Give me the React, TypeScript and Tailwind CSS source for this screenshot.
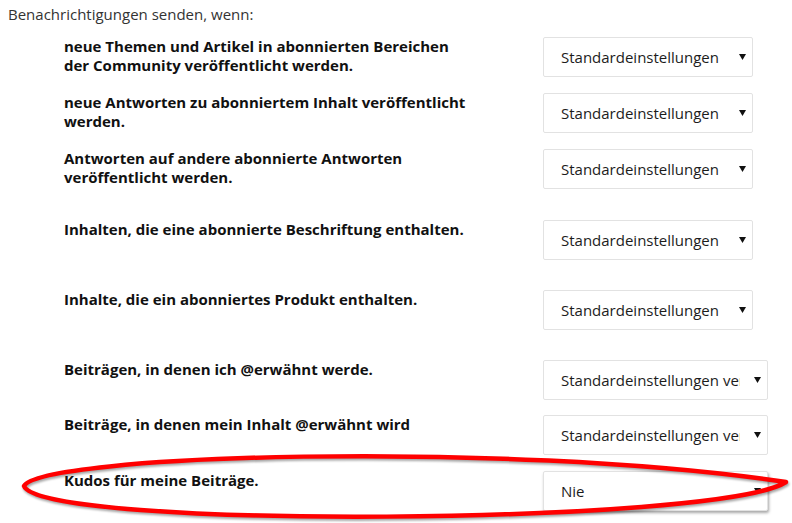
import React from "react";

interface Row {
  lines: string[];
  value: string;
  wide: boolean;
  gap: string;
  focused?: boolean;
}

const rows: Row[] = [
  {
    lines: ["neue Themen und Artikel in abonnierten Bereichen", "der Community veröffentlicht werden."],
    value: "Standardeinstellungen",
    wide: false,
    gap: "mt-[13px]",
  },
  {
    lines: ["neue Antworten zu abonniertem Inhalt veröffentlicht", "werden."],
    value: "Standardeinstellungen",
    wide: false,
    gap: "mt-4",
  },
  {
    lines: ["Antworten auf andere abonnierte Antworten", "veröffentlicht werden."],
    value: "Standardeinstellungen",
    wide: false,
    gap: "mt-4",
  },
  {
    lines: ["Inhalten, die eine abonnierte Beschriftung enthalten."],
    value: "Standardeinstellungen",
    wide: false,
    gap: "mt-[31px]",
  },
  {
    lines: ["Inhalte, die ein abonniertes Produkt enthalten."],
    value: "Standardeinstellungen",
    wide: false,
    gap: "mt-[30px]",
  },
  {
    lines: ["Beiträgen, in denen ich @erwähnt werde."],
    value: "Standardeinstellungen verwenden",
    wide: true,
    gap: "mt-[30px]",
  },
  {
    lines: ["Beiträge, in denen mein Inhalt @erwähnt wird"],
    value: "Standardeinstellungen verwenden",
    wide: true,
    gap: "mt-[15px]",
  },
  {
    lines: ["Kudos für meine Beiträge."],
    value: "Nie",
    wide: true,
    gap: "mt-4",
    focused: true,
  },
];

const SelectBox = ({ value, wide, focused }: { value: string; wide: boolean; focused?: boolean }) => (
  <div
    className={`relative h-10 shrink-0 bg-white border border-[#e2e2e2] rounded-[2px] flex items-center pl-[17px] pr-[27px] ${
      wide ? "w-[225px]" : "w-[210px]"
    } ${focused ? "shadow-[1px_2px_3px_rgba(0,0,0,0.35)]" : ""}`}
  >
    <span className="whitespace-nowrap overflow-hidden text-[15px] text-[#1c1c1c] leading-5">{value}</span>
    <svg className="absolute right-[6px] top-[16px]" width="7" height="6" viewBox="0 0 7 6">
      <path d="M0 0 H7 L3.5 6 Z" fill="#111" />
    </svg>
  </div>
);

export default function App() {
  return (
    <div className="relative w-[792px] h-[523px] bg-white overflow-hidden font-['Open_Sans',sans-serif]">
      <div className="pl-2 pt-[4px] text-[15px] leading-5 text-[#333]">Benachrichtigungen senden, wenn:</div>

      <div className="pl-16">
        {rows.map((row, i) => (
          <div key={i} className={`flex items-start ${row.gap}`}>
            <div className="w-[479px] text-[15px] leading-[19px] font-bold text-[#111]">
              {row.lines.map((l, j) => (
                <div key={j}>{l}</div>
              ))}
            </div>
            <SelectBox value={row.value} wide={row.wide} focused={row.focused} />
          </div>
        ))}
      </div>

      <svg
        className="absolute inset-0 pointer-events-none drop-shadow-[1px_2px_1px_rgba(0,0,0,0.35)]"
        width="792"
        height="523"
        viewBox="0 0 792 523"
      >
        <path
          d="M24 486 C 40 455, 500 440, 786 482 C 720 525, 40 530, 24 486 Z"
          fill="none"
          stroke="#ff0000"
          strokeWidth="4.5"
          strokeLinejoin="round"
        />
      </svg>
    </div>
  );
}
